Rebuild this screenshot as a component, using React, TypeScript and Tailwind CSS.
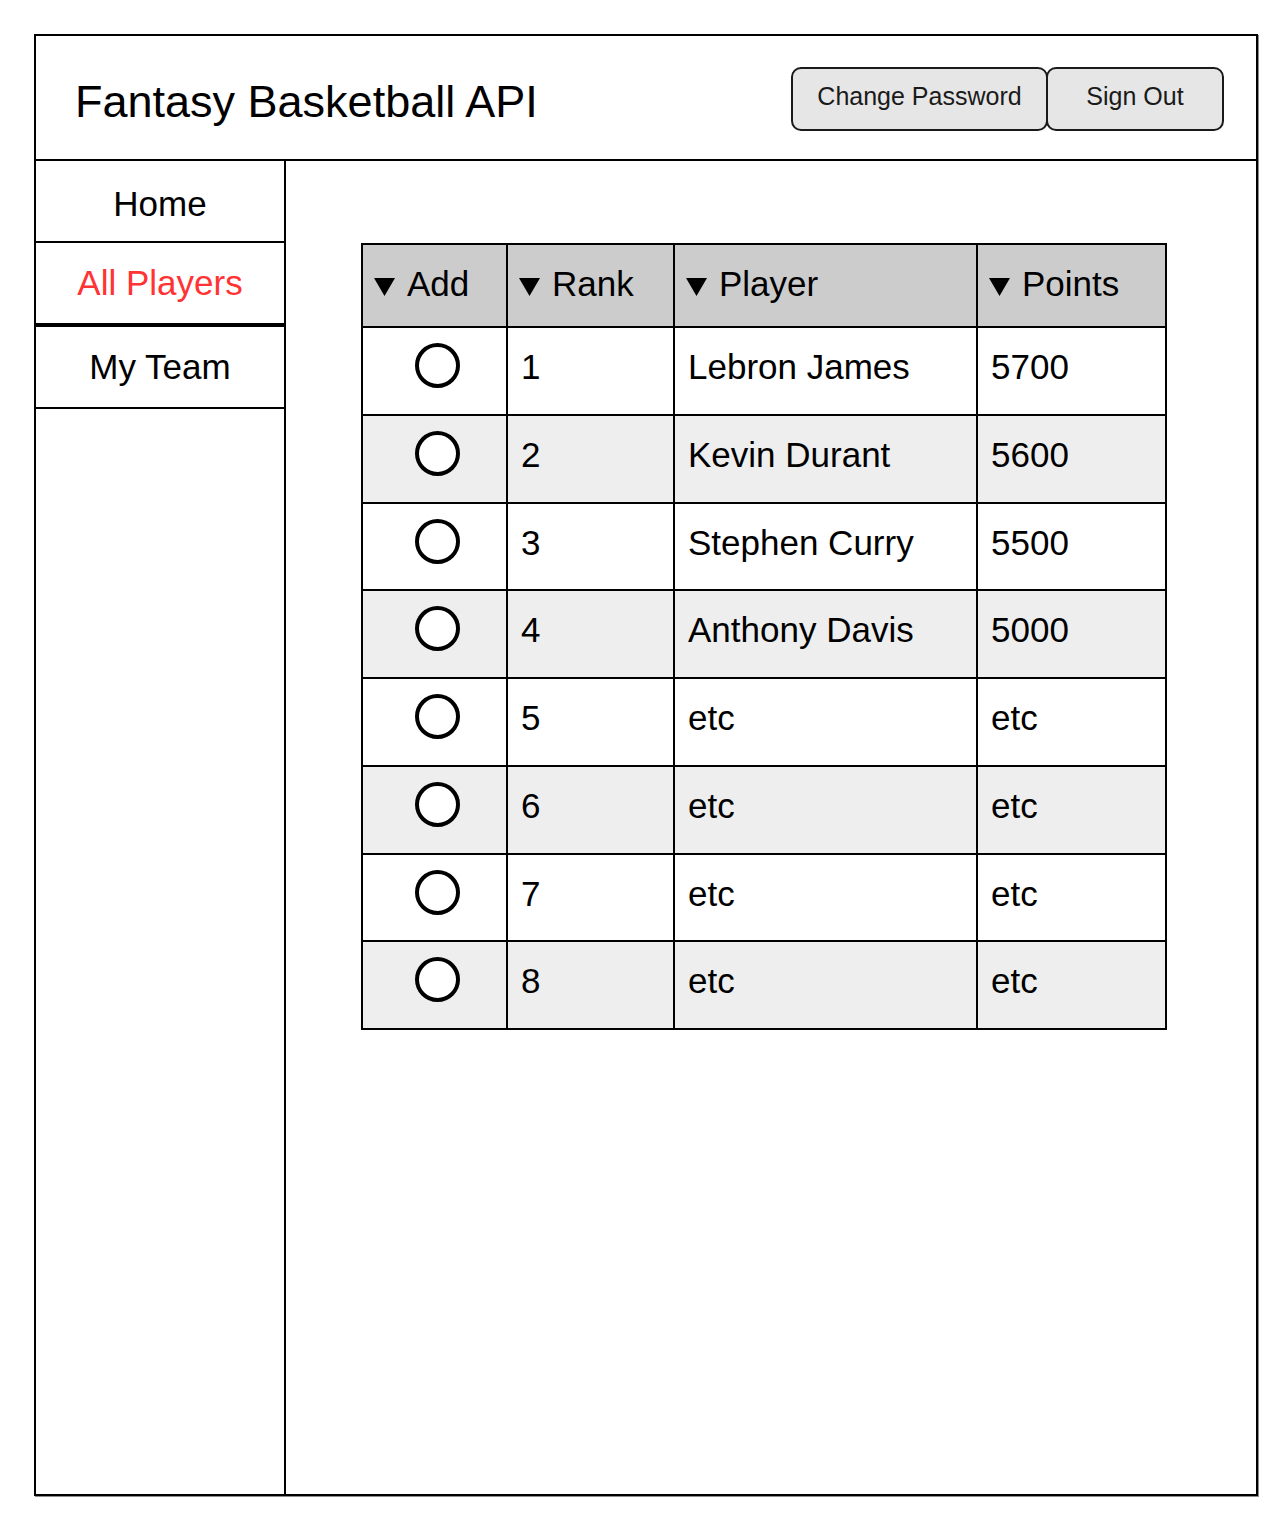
import React from "react";

type Player = {
  rank: number;
  name: string;
  points: string;
};

const players: Player[] = [
  { rank: 1, name: "Lebron James", points: "5700" },
  { rank: 2, name: "Kevin Durant", points: "5600" },
  { rank: 3, name: "Stephen Curry", points: "5500" },
  { rank: 4, name: "Anthony Davis", points: "5000" },
  { rank: 5, name: "etc", points: "etc" },
  { rank: 6, name: "etc", points: "etc" },
  { rank: 7, name: "etc", points: "etc" },
  { rank: 8, name: "etc", points: "etc" },
];

const columns = ["Add", "Rank", "Player", "Points"];

const SortArrow = () => (
  <svg width="21" height="18" viewBox="0 0 21 18" className="mt-[20px] shrink-0">
    <polygon points="0,0 21,0 10.5,18" fill="#000" />
  </svg>
);

const NavItem = ({
  label,
  active,
  extraTop,
  className = "",
}: {
  label: string;
  active?: boolean;
  extraTop?: boolean;
  className?: string;
}) => (
  <div
    className={`flex items-center justify-center border-b-2 border-black ${
      extraTop ? "border-t-2 h-[84px]" : "h-[82px]"
    } ${active ? "text-[#ff3333]" : "text-black"} ${className}`}
  >
    {label}
  </div>
);

const App = () => {
  return (
    <div className="min-h-screen bg-white pt-[34px] pl-[34px] font-['Liberation_Sans',Arial,sans-serif] text-black">
      <div className="flex h-[1462px] w-[1224px] flex-col border-2 border-black shadow-[1px_1px_0_0_rgba(0,0,0,0.45)]">
        {/* header */}
        <header className="flex h-[125px] shrink-0 items-center justify-between border-b-2 border-black pl-[39px] pr-[32px] pt-[3px]">
          <h1 className="mt-[4px] text-[45px] leading-none">Fantasy Basketball API</h1>
          <div className="flex">
            <button className="h-[64px] w-[257px] rounded-[10px] border-2 border-[#1a1a1a] bg-[#e6e6e6] pb-[4px] text-[25px] text-[#1a1a1a]">
              Change Password
            </button>
            <button className="-ml-[2px] h-[64px] w-[178px] rounded-[10px] border-2 border-[#1a1a1a] bg-[#e6e6e6] pb-[4px] text-[25px] text-[#1a1a1a]">
              Sign Out
            </button>
          </div>
        </header>

        <div className="flex flex-1">
          {/* sidebar */}
          <aside className="w-[250px] shrink-0 border-r-2 border-black text-[35px]">
            <NavItem label="Home" className="pt-[7px]" />
            <NavItem label="All Players" active />
            <NavItem label="My Team" extraTop />
          </aside>

          {/* players table */}
          <main className="flex-1 pl-[75px] pt-[82px]">
            <div className="w-fit border-2 border-black text-[35px]">
              <div className="grid h-[81px] grid-cols-[143px_167px_303px_189px] bg-[#cccccc]">
                {columns.map((col, i) => (
                  <div
                    key={col}
                    className={`flex items-start pl-[11px] pt-[13px] ${i > 0 ? "border-l-2 border-black pl-[11px]" : ""}`}
                  >
                    <SortArrow />
                    <span className="ml-[12px]">{col}</span>
                  </div>
                ))}
              </div>
              {players.map((p, idx) => (
                <div
                  key={p.rank}
                  className={`grid h-[87.75px] grid-cols-[143px_167px_303px_189px] border-t-2 border-black ${
                    idx % 2 === 1 ? "bg-[#eeeeee]" : "bg-white"
                  }`}
                >
                  <div className="flex items-start pl-[52px] pt-[15px]">
                    <div className="h-[45px] w-[45px] rounded-full border-[4px] border-black bg-white"></div>
                  </div>
                  <div className="border-l-2 border-black pl-[13px] pt-[13px]">{p.rank}</div>
                  <div className="border-l-2 border-black pl-[13px] pt-[13px]">{p.name}</div>
                  <div className="border-l-2 border-black pl-[13px] pt-[13px]">{p.points}</div>
                </div>
              ))}
            </div>
          </main>
        </div>
      </div>
    </div>
  );
};

export default App;
